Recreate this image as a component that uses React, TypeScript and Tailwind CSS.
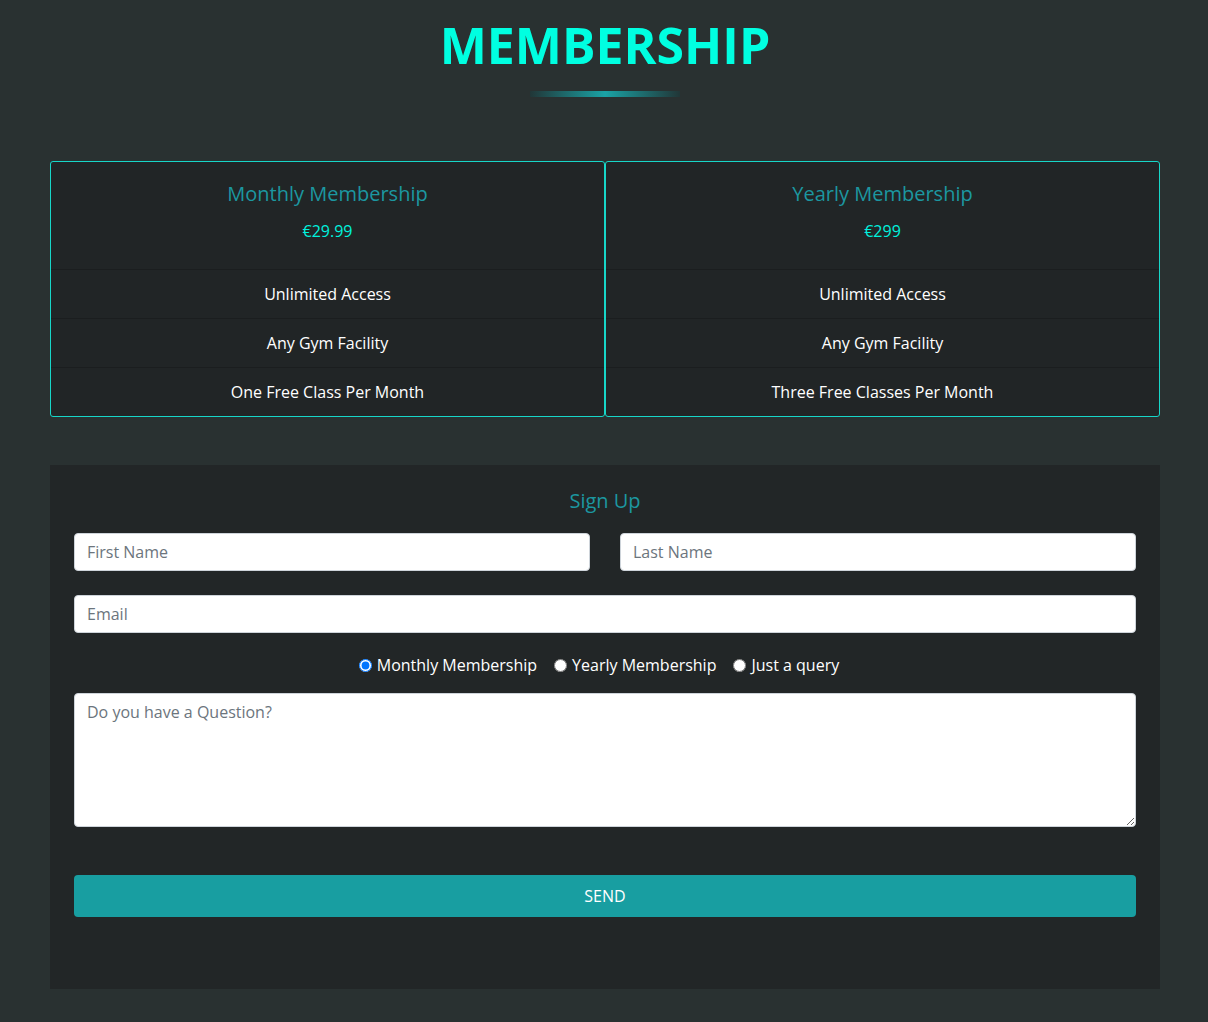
import React from "react";

const plans = [
  {
    name: "Monthly Membership",
    price: "€29.99",
    perks: ["Unlimited Access", "Any Gym Facility", "One Free Class Per Month"],
  },
  {
    name: "Yearly Membership",
    price: "€299",
    perks: ["Unlimited Access", "Any Gym Facility", "Three Free Classes Per Month"],
  },
];

const inputCls =
  "w-full h-[38px] rounded-[4px] border border-[#ced4da] bg-white px-3 text-base text-[#495057] placeholder:text-[#6c757d] outline-none";

export default function App() {
  return (
    <div className="min-h-[1022px] bg-[#293131] font-['Open_Sans',sans-serif] text-white pb-[33px]">
      <header className="flex flex-col items-center pt-[14px] pl-[2px]">
        <h1 className="text-[50px] leading-[62px] font-bold text-[#00ffe1]">MEMBERSHIP</h1>
        <div className="mt-[15px] h-[6px] w-[150px] bg-[linear-gradient(90deg,#213637,#1aa3a6,#213637)]" />
      </header>

      <section className="ml-[50px] mt-[64px] w-[1110px] grid grid-cols-2">
        {plans.map((p) => (
          <div key={p.name} className="border border-[#17d6c8] rounded-[3px] bg-[#212526] text-center">
            <div className="pt-[20px] pb-[26px]">
              <h3 className="text-[20px] leading-[24px] text-[#1c97a0]">{p.name}</h3>
              <p className="mt-[13px] text-base leading-[24px] text-[#00f2de]">{p.price}</p>
            </div>
            {p.perks.map((perk) => (
              <div key={perk} className="border-t border-[#1b1e1f] py-[12px] text-base leading-[24px]">
                {perk}
              </div>
            ))}
          </div>
        ))}
      </section>

      <section className="ml-[50px] mt-[48px] w-[1110px] bg-[#222627] px-[24px] pt-[24px] pb-[72px]">
        <h2 className="text-center text-[20px] leading-[24px] text-[#1c97a0]">Sign Up</h2>
        <form className="mt-[20px] flex flex-col">
          <div className="grid grid-cols-2 gap-[30px]">
            <input className={inputCls} placeholder="First Name" />
            <input className={inputCls} placeholder="Last Name" />
          </div>
          <input className={inputCls + " mt-[24px]"} placeholder="Email" />
          <div className="mt-[20px] flex justify-center gap-[17px] pr-[12px] text-base leading-[24px]">
            <label className="flex items-center gap-[5px]">
              <input type="radio" name="plan" defaultChecked className="m-0 h-[13px] w-[13px]" />
              Monthly Membership
            </label>
            <label className="flex items-center gap-[5px]">
              <input type="radio" name="plan" className="m-0 h-[13px] w-[13px]" />
              Yearly Membership
            </label>
            <label className="flex items-center gap-[5px]">
              <input type="radio" name="plan" className="m-0 h-[13px] w-[13px]" />
              Just a query
            </label>
          </div>
          <textarea
            className="mt-[16px] h-[134px] w-full rounded-[4px] border border-[#ced4da] bg-white px-3 py-[6px] text-base text-[#495057] placeholder:text-[#6c757d] outline-none"
            placeholder="Do you have a Question?"
          />
          <button
            type="button"
            className="mt-[48px] h-[42px] w-full rounded-[4px] bg-[#189ea1] text-base text-white"
          >
            SEND
          </button>
        </form>
      </section>
    </div>
  );
}
